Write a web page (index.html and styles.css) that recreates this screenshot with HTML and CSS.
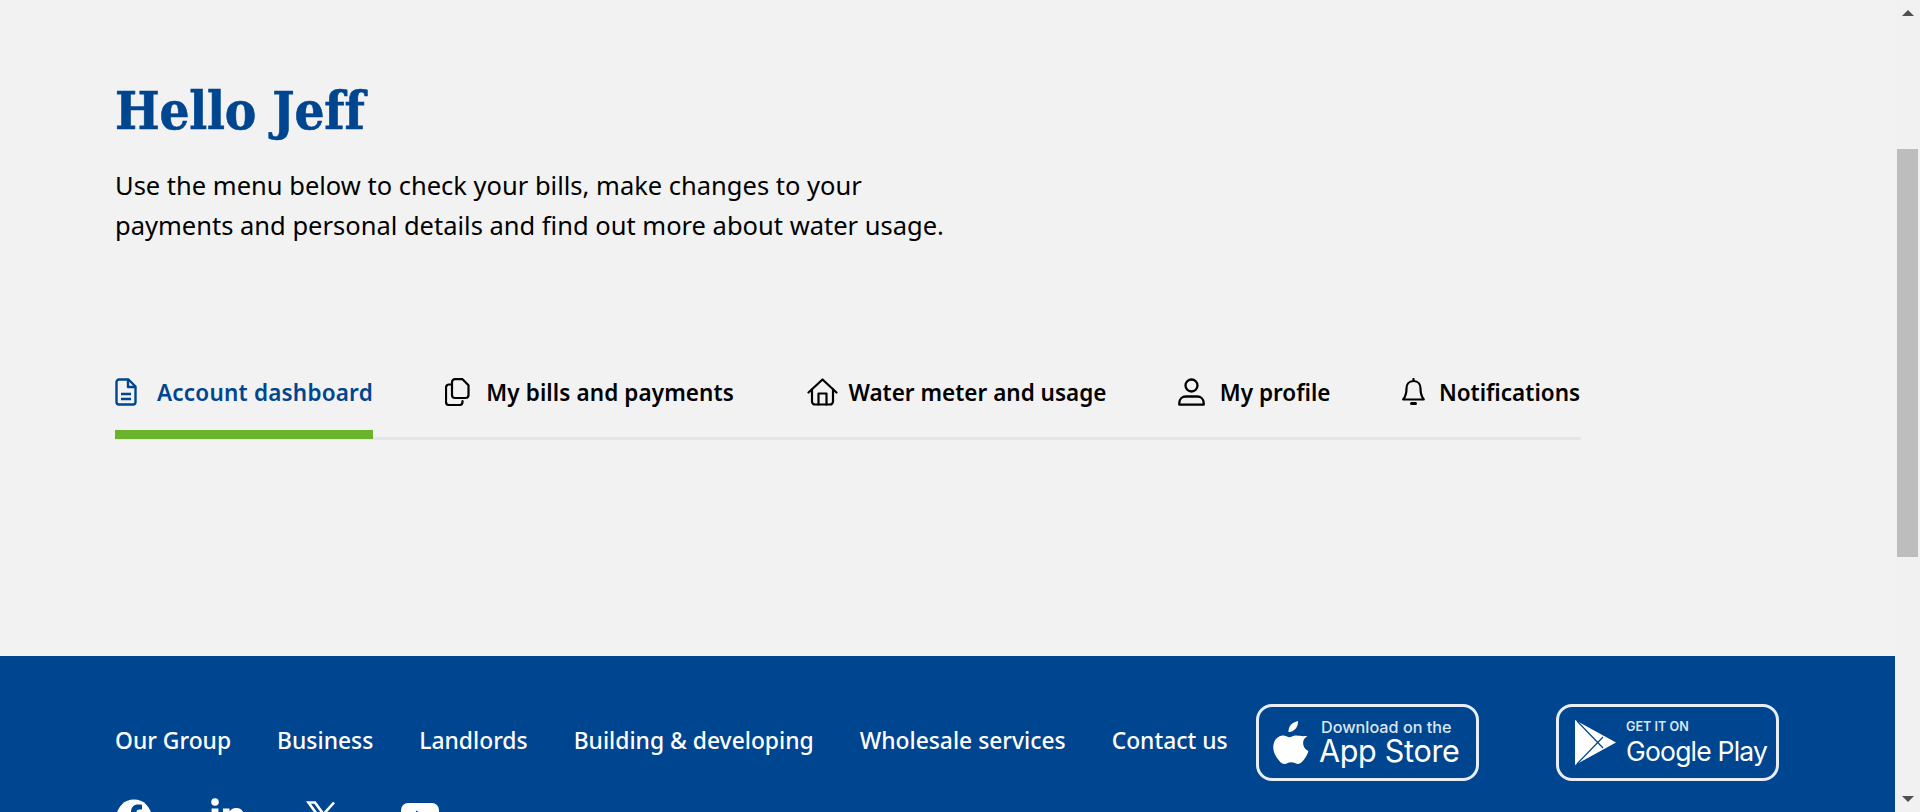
FILE: index.html
```html
<!DOCTYPE html>
<html lang="en">
<head>
  <meta charset="UTF-8">
  <meta name="viewport" content="width=device-width, initial-scale=1.0">
  <title>Account dashboard</title>
  <link rel="stylesheet" href="styles.css">
</head>
<body>
  <div class="page">
    <main class="content">
      <h1>Hello Jeff</h1>
      <p class="intro">Use the menu below to check your bills, make changes to your<br>payments and personal details and find out more about water usage.</p>
      <nav class="tabs">
        <a class="tab tab-doc active" href="#">
          <svg class="tab-icon" width="22" height="28" viewBox="0 0 22 28" fill="none" stroke="currentColor" stroke-width="2.4" stroke-linejoin="round" stroke-linecap="round"><path d="M4 1.5h9.5L20.5 8.500v15.500a2.500 2.500 0 0 1-2.500 2.500H4a2.500 2.500 0 0 1-2.500-2.500V4A2.500 2.500 0 0 1 4 1.500z"/><path d="M13 2v7h7"/><path d="M6 16h10M6 21h10" stroke-linecap="butt"/></svg>
          <span>Account dashboard</span>
        </a>
        <a class="tab tab-copy" href="#">
          <svg class="tab-icon" width="25" height="28" viewBox="0 0 25 28" fill="none" stroke="currentColor" stroke-width="2.2" stroke-linejoin="round" stroke-linecap="round"><path d="M10 1.200h7.500l6 6V17a3 3 0 0 1-3 3H10a3 3 0 0 1-3-3V4.200a3 3 0 0 1 3-3z"/><path d="M6 6.500H4a3 3 0 0 0-3 3V24a3 3 0 0 0 3 3h10.500a3 3 0 0 0 3-3v-1"/></svg>
          <span>My bills and payments</span>
        </a>
        <a class="tab tab-home" href="#">
          <svg class="tab-icon" width="31" height="28" viewBox="0 0 31 28" fill="none" stroke="currentColor" stroke-width="2.2" stroke-linejoin="round" stroke-linecap="round"><path d="M1.500 14.500 15.500 1.500l14 13"/><path d="M5 11.500V23.500a3 3 0 0 0 3 3h15a3 3 0 0 0 3-3V11.500"/><path d="M11.500 26.500V15.500h8v11"/></svg>
          <span>Water meter and usage</span>
        </a>
        <a class="tab tab-user" href="#">
          <svg class="tab-icon" width="27" height="28" viewBox="0 0 27 28" fill="none" stroke="currentColor" stroke-width="2.300" stroke-linejoin="round"><circle cx="13.500" cy="7.500" r="6"/><path d="M1.300 26.700v-1.700c0-4 3-6.500 6.500-6.500h11.400c3.500 0 6.500 2.500 6.500 6.500v1.700z"/></svg>
          <span>My profile</span>
        </a>
        <a class="tab tab-bell" href="#">
          <svg class="tab-icon" width="23" height="28" viewBox="0 0 23 28" fill="none" stroke="currentColor" stroke-width="2.200" stroke-linejoin="round" stroke-linecap="round"><path d="M11.500 3c-4.500 0-7 3.500-7 7.500 0 5-1 8-3.300 11h20.600c-2.300-3-3.300-6-3.300-11C18.500 6.500 16 3 11.500 3z"/><path d="M11.500 1v2"/><path d="M9.500 25.500h4" stroke-width="3"/></svg>
          <span>Notifications</span>
        </a>
      </nav>
    </main>
    <footer class="footer">
      <div class="footer-left">
        <ul class="footer-links">
          <li><a href="#">Our Group</a></li>
          <li><a href="#">Business</a></li>
          <li><a href="#">Landlords</a></li>
          <li><a href="#">Building &amp; developing</a></li>
          <li><a href="#">Wholesale services</a></li>
          <li><a href="#">Contact us</a></li>
        </ul>
        <div class="social">
          <svg class="social-fb" width="36" height="36" viewBox="0 0 36 36"><circle cx="18" cy="18" r="17.500" fill="#fff"/><path d="M20.500 36V22h4.500l.8-5.500h-5.300v-3.200c0-1.600.7-2.800 3-2.800h2.500V5.800c-1-.2-2.500-.3-3.800-.3-4.300 0-7.200 2.600-7.200 7.300v3.700H10V22h4.800v14z" fill="#00458f"/></svg>
          <svg class="social-in" width="33" height="33" viewBox="0 0 33 33" fill="#fff"><circle cx="4" cy="4" r="3.800"/><rect x="0.600" y="10.500" width="6.800" height="22"/><path d="M12 10.500h6.500v3c1.200-2 3.500-3.600 6.500-3.600 6.500 0 8 4.300 8 9.800v13h-6.800V21c0-2.800-.5-5-3.300-5s-4 2.200-4 5v11.500H12z"/></svg>
          <svg class="social-x" width="31" height="30" viewBox="0 0 31 30" fill="none" stroke="#fff" stroke-width="2.600"><path d="M2.500 1.500h6.500l19.500 27h-6.500z"/><path d="M28 1.500 17 13.800M13.500 17.500 2.500 28.500"/></svg>
          <svg class="social-yt" width="38" height="27" viewBox="0 0 38 27"><rect width="38" height="27" rx="7" fill="#fff"/><path d="M15 7.500v12l10.500-6z" fill="#00458f"/></svg>
        </div>
      </div>
      <a class="badge badge-apple" href="#">
        <svg class="badge-logo" width="36" height="44" viewBox="0 0 36 44" fill="#fff"><path d="M25 0c.3 3-.8 5.800-2.500 7.800-1.800 2.100-4.500 3.500-7 3.300-.3-2.800 1-5.700 2.600-7.500C20 1.700 23 .2 25 0z"/><path d="M34.500 15c-2.900 1.800-4.500 4.300-4.400 7.300.1 3.600 2.100 6.300 5.400 7.700-1 2.900-2.300 5.600-4.100 8-1.800 2.400-3.700 4.900-6.500 4.900-2.700 0-3.500-1.600-6.700-1.600-3.300 0-4.200 1.600-6.700 1.700-2.700.1-4.800-2.700-6.700-5.100C1 33.500-.8 27.500.8 22.500c1.100-4.300 4.800-7.800 9-7.900 2.600-.1 5 1.700 6.500 1.700s4.200-2.100 7.100-1.800c2.800.1 6.400 1 9 .5z"/></svg>
        <span class="badge-text">
          <span class="badge-small">Download on the</span>
          <span class="badge-big">App Store</span>
        </span>
      </a>
      <a class="badge badge-google" href="#">
        <svg class="badge-logo" width="42" height="45" viewBox="0 0 42 45"><path d="M0 0 41 22.500 0 45z" fill="#fff"/><path d="M2 1 28 28M2 44 28 17" stroke="#00458f" stroke-width="1.200" fill="none"/></svg>
        <span class="badge-text">
          <span class="badge-small badge-small-caps">GET IT ON</span>
          <span class="badge-big badge-big-google">Google Play</span>
        </span>
      </a>
    </footer>
  </div>
  <div class="scrollbar">
    <span class="arrow-up"></span>
    <div class="track"><div class="thumb"></div></div>
    <span class="arrow-down"></span>
  </div>
</body>
</html>
```

FILE: styles.css
```css
* {
  box-sizing: border-box;
}
body {
  margin: 0;
  height: 812px;
  overflow: hidden;
  display: flex;
  background-color: #f1f1f1;
  font-family: "Noto Sans", Arial, sans-serif;
  color: #000;
}
a {
  color: inherit;
  text-decoration: none;
}
.page {
  width: 1895px;
  height: 812px;
  overflow: hidden;
  display: flex;
  flex-direction: column;
}
.content {
  flex: none;
  height: 656px;
  padding: 76px 0 0 115px;
  background-color: #f2f2f2;
}
h1 {
  margin: 0;
  font-family: "DejaVu Serif", serif;
  font-stretch: condensed;
  font-size: 52.5px;
  line-height: 70px;
  font-weight: 700;
  letter-spacing: -0.2px;
  -webkit-text-stroke: 0.6px #00458f;
  color: #00458f;
}
.intro {
  margin: 19px 0 0;
  font-size: 25.5px;
  line-height: 40px;
}
.tabs {
  display: flex;
  gap: 71.4px;
  width: 1466px;
  margin-top: 123px;
  border-bottom: 3px solid #e6e6e6;
}
.tab {
  display: flex;
  align-items: center;
  gap: 14px;
  height: 71px;
  margin-bottom: -2px;
  padding-bottom: 14px;
  border-bottom: 9px solid transparent;
  font-size: 22.5px;
  font-weight: 600;
  white-space: nowrap;
}
.tab-doc {
  gap: 20px;
  letter-spacing: 0.2px;
  margin-right: 1px;
}
.tab-copy {
  gap: 16px;
  letter-spacing: 0.1px;
  margin-right: 2px;
}
.tab-home {
  gap: 10px;
}
.tab-user {
  gap: 15px;
}
.tab.active {
  color: #00458f;
  border-bottom-color: #69b32d;
}
.tab-icon {
  flex: none;
}
.footer {
  flex: none;
  height: 200px;
  padding: 48px 0 0 115px;
  display: flex;
  align-items: flex-start;
  background-color: #00458f;
  color: #fff;
}
.footer-left {
  width: 1141px;
}
.footer-links {
  display: flex;
  gap: 46px;
  margin: 21px 0 0;
  padding: 0;
  list-style: none;
  font-size: 22.85px;
  line-height: 32px;
  font-weight: 500;
  white-space: nowrap;
}
.social {
  display: flex;
  align-items: flex-start;
  margin-top: 42px;
  padding-left: 1px;
}
.social-in {
  margin: -1px 62px 0 59px;
}
.social-x {
  margin-top: 2px;
  margin-right: 64px;
}
.social-yt {
  margin-top: 4px;
}
.badge {
  flex: none;
  width: 223px;
  height: 77px;
  border: 3px solid #e8eef5;
  border-radius: 16px;
  display: flex;
  align-items: center;
  gap: 12px;
  padding-left: 14px;
}
.badge-google {
  margin-left: 77px;
  padding-left: 16px;
}
.badge-google .badge-text {
  margin-left: -3px;
}
.badge-text {
  display: flex;
  flex-direction: column;
  margin-top: -2px;
  font-family: Inter, Arial, sans-serif;
  white-space: nowrap;
}
.badge-small {
  font-size: 16.2px;
  line-height: 18px;
  font-weight: 500;
  color: #dbe5f0;
}
.badge-small-caps {
  font-size: 12.6px;
  font-weight: 600;
}
.badge-big {
  margin-left: -2px;
  font-size: 30.5px;
  line-height: 30px;
  letter-spacing: -0.3px;
}
.badge-big-google {
  margin-left: 0;
  font-size: 26.5px;
  letter-spacing: -0.8px;
}
.scrollbar {
  width: 25px;
  height: 812px;
  display: flex;
  flex-direction: column;
  align-items: center;
  background-color: #f1f1f1;
  padding-left: 2px;
  padding-right: 2px;
}
.arrow-up, .arrow-down {
  flex: none;
  width: 0;
  height: 0;
  border-left: 6px solid transparent;
  border-right: 6px solid transparent;
}
.arrow-up {
  margin-top: 10px;
  border-bottom: 6px solid #505050;
}
.arrow-down {
  margin-bottom: 10px;
  border-top: 6px solid #505050;
}
.track {
  flex: 1;
  width: 100%;
  padding-top: 133px;
}
.thumb {
  height: 408px;
  background-color: #bdbdbd;
}
```
